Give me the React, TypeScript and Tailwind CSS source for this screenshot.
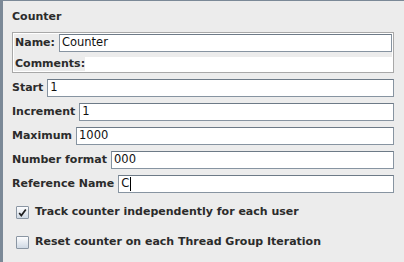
import { useState } from "react";

const FONT = { fontFamily: '"DejaVu Sans", "Liberation Sans", sans-serif' };

const ROWS: { label: string; value: string; caret?: boolean }[] = [
  { label: "Start", value: "1" },
  { label: "Increment", value: "1" },
  { label: "Maximum", value: "1000" },
  { label: "Number format", value: "000" },
  { label: "Reference Name", value: "C", caret: true },
];

function Field({ value, caret }: { value: string; caret?: boolean }) {
  return (
    <div className="flex h-[18px] flex-1 items-center border border-[#8794a1] border-t-[#6d7a87] bg-white pl-[2px] text-[11.5px] font-normal text-[#111]">
      <span>{value}</span>
      {caret && <span className="ml-px h-[14px] w-px bg-black" />}
    </div>
  );
}

function Check({ checked, label, onToggle }: { checked: boolean; label: string; onToggle: () => void }) {
  return (
    <button type="button" onClick={onToggle} className="flex h-[14px] items-center gap-[6px] pl-[4px] text-left">
      <span className="flex h-[13px] w-[13px] items-center justify-center rounded-[1px] border border-[#8a96a3] bg-gradient-to-b from-[#fdfdfe] to-[#cfd9e4]">
        {checked && (
          <svg width="9" height="9" viewBox="0 0 9 9">
            <path d="M1.2 5 L3.3 7.6 L7.8 1.4" fill="none" stroke="#1f1f1f" strokeWidth="1.7" />
          </svg>
        )}
      </span>
      <span className="whitespace-nowrap text-[11px] font-bold text-[#2b2b2b]">{label}</span>
    </button>
  );
}

export default function App() {
  const [track, setTrack] = useState(true);
  const [reset, setReset] = useState(false);

  return (
    <div style={FONT} className="h-[262px] w-[404px] overflow-hidden border-l-[3px] border-t border-[#7b8997] bg-[#ececec] pl-[9px] pr-[10px] text-[#2b2b2b]">
      <div className="pt-[8px] text-[11px] font-bold leading-[16px]">Counter</div>

      <div className="mt-[7px] border border-[#a8a8a8]">
        <div className="border border-white">
          <div className="flex items-center gap-[4px] pl-px pr-0">
            <span className="text-[11px] font-bold">Name:</span>
            <Field value="Counter" />
          </div>
          <div className="mt-[5px] flex h-[14px] items-center">
            <span className="w-[71px] whitespace-nowrap pl-px text-[11px] font-bold leading-[14px]">Comments:</span>
            <div className="h-full flex-1 bg-white" />
          </div>
        </div>
      </div>

      <div className="mt-[6px] flex flex-col gap-[6px]">
        {ROWS.map((r) => (
          <div key={r.label} className="flex items-center gap-[4px]">
            <span className="whitespace-nowrap text-[11px] font-bold">{r.label}</span>
            <Field value={r.value} caret={r.caret} />
          </div>
        ))}
      </div>

      <div className="mt-[12px] flex flex-col gap-[16px]">
        <Check checked={track} label="Track counter independently for each user" onToggle={() => setTrack(!track)} />
        <Check checked={reset} label="Reset counter on each Thread Group Iteration" onToggle={() => setReset(!reset)} />
      </div>
    </div>
  );
}
